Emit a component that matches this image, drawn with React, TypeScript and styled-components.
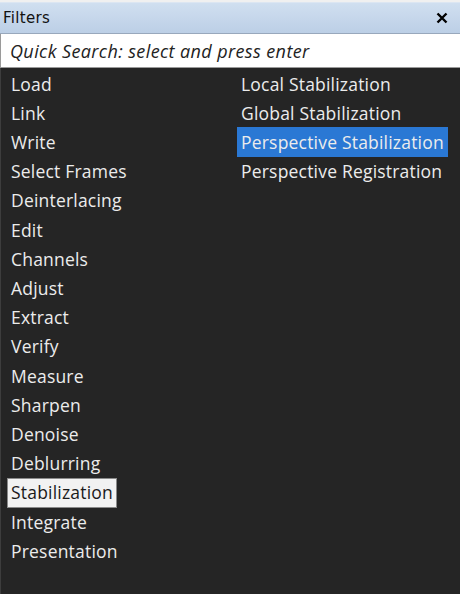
import React from "react";
import styled, { createGlobalStyle } from "styled-components";

const Global = createGlobalStyle`
  html, body { margin: 0; padding: 0; background: #f0f0f0; }
  body { width: 460px; height: 594px; overflow: hidden; }
`;

const Panel = styled.div`
  width: 460px;
  height: 594px;
  display: flex;
  flex-direction: column;
  background: #f0f0f0;
  box-sizing: border-box;
  padding-top: 2px;
`;

const TitleBar = styled.div`
  height: 30px;
  display: flex;
  align-items: center;
  justify-content: space-between;
  padding: 0 12px 0 3px;
  background: linear-gradient(#d0dff0, #bccfe6);
  border-top: 1px solid #dce6f2;
  border-bottom: 1px solid #98a8bc;
  font-family: "DejaVu Sans", Tahoma, sans-serif;
  font-size: 15px;
  letter-spacing: 0.3px;
  color: #111;
`;

const Close = styled.svg`
  width: 12px;
  height: 12px;
`;

const Search = styled.div`
  height: 33px;
  display: flex;
  align-items: center;
  padding-left: 9px;
  background: #fff;
  border-left: 1px solid #9a9a9a;
  border-bottom: 1px solid #9a9a9a;
  font-family: "Open Sans", sans-serif;
  font-style: italic;
  font-size: 18px;
  letter-spacing: 0.4px;
  color: #222;
`;

const Body = styled.div`
  flex: 1;
  background: #252525;
  border-left: 1px solid #3d3d3d;
  display: grid;
  grid-template-columns: 230px 1fr;
  padding: 1px 0 0 6px;
`;

const Column = styled.div`
  display: flex;
  flex-direction: column;
  align-items: flex-start;
`;

const Item = styled.div<{ $state?: "active" | "selected" }>`
  height: 30px;
  margin-bottom: -0.8px;
  box-sizing: border-box;
  display: flex;
  align-items: center;
  padding: 0 3px 1px;
  font-family: "Open Sans", sans-serif;
  font-size: 17.5px;
  letter-spacing: 0.2px;
  white-space: nowrap;
  color: ${(p) => (p.$state === "active" ? "#1a1a1a" : "#ececec")};
  background: ${(p) =>
    p.$state === "active" ? "#f2f2f2" : p.$state === "selected" ? "#2a78d4" : "transparent"};
  border: 1px solid ${(p) => (p.$state === "active" ? "#8a8a8a" : "transparent")};
`;

const left = [
  "Load", "Link", "Write", "Select Frames", "Deinterlacing", "Edit", "Channels",
  "Adjust", "Extract", "Verify", "Measure", "Sharpen", "Denoise", "Deblurring",
  "Stabilization", "Integrate", "Presentation",
];
const right = [
  "Local Stabilization", "Global Stabilization", "Perspective Stabilization",
  "Perspective Registration",
];

export default function App() {
  return (
    <>
      <Global />
      <Panel>
        <TitleBar>
          <span>Filters</span>
          <Close viewBox="0 0 12 12">
            <path d="M1.5 1.5 L10.5 10.5 M10.5 1.5 L1.5 10.5" stroke="#000" strokeWidth="2.4" />
          </Close>
        </TitleBar>
        <Search>Quick Search: select and press enter</Search>
        <Body>
          <Column>
            {left.map((t) => (
              <Item key={t} $state={t === "Stabilization" ? "active" : undefined}>{t}</Item>
            ))}
          </Column>
          <Column>
            {right.map((t) => (
              <Item key={t} $state={t === "Perspective Stabilization" ? "selected" : undefined}>{t}</Item>
            ))}
          </Column>
        </Body>
      </Panel>
    </>
  );
}
